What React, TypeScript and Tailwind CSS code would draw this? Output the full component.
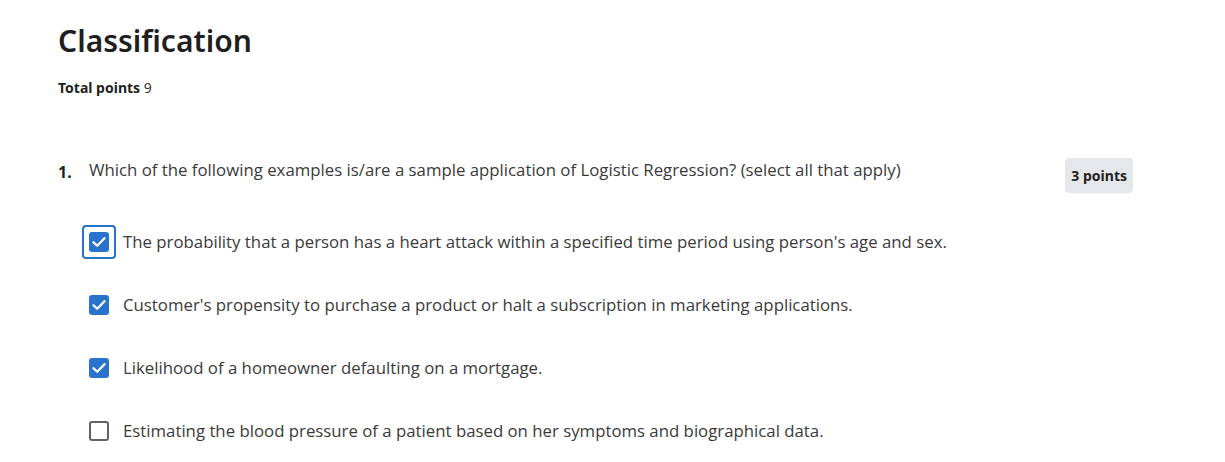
import React from "react";

const options = [
  { text: "The probability that a person has a heart attack within a specified time period using person's age and sex.", checked: true, focus: true },
  { text: "Customer's propensity to purchase a product or halt a subscription in marketing applications.", checked: true },
  { text: "Likelihood of a homeowner defaulting on a mortgage.", checked: true },
  { text: "Estimating the blood pressure of a patient based on her symptoms and biographical data.", checked: false },
];

function Box({ checked, focus }: { checked: boolean; focus?: boolean }) {
  const box = checked ? (
    <div className="w-[20px] h-[20px] rounded-[3px] bg-[#2a73cc] flex items-center justify-center">
      <svg width="18" height="18" viewBox="0 0 18 18" fill="none">
        <path d="M3.5 9.2 L7.2 12.8 L14.5 5.2" stroke="white" strokeWidth="2.3" strokeLinecap="round" strokeLinejoin="round" />
      </svg>
    </div>
  ) : (
    <div className="w-[20px] h-[20px] rounded-[3px] border-2 border-[#636363] bg-white" />
  );
  return (
    <div className={"w-[34px] h-[34px] flex items-center justify-center rounded-[4px] " + (focus ? "border-2 border-[#2a73cc]" : "border-2 border-transparent")}>
      {box}
    </div>
  );
}

export default function App() {
  return (
    <div className="w-[1225px] h-[462px] bg-white overflow-hidden text-[#1f1f1f]" style={{ fontFamily: "'Open Sans', sans-serif" }}>
      <div className="pl-[58px] pt-[21px]">
        <h1 className="text-[30px] leading-[40px] font-semibold text-[#1f1f1f]" style={{ fontFamily: "'Noto Sans', sans-serif" }}>Classification</h1>
        <div className="mt-[17px] text-[14px] leading-[20px]" style={{ fontFamily: "'Noto Sans', sans-serif" }}>
          <span className="font-bold">Total points</span> <span className="text-[#333]">9</span>
        </div>
        <div className="mt-[59px] flex items-start pr-[92px]">
          <div className="w-[31px] pt-[3px] text-[16px] font-bold leading-[24px]" style={{ fontFamily: "'Noto Sans', sans-serif" }}>1.</div>
          <div className="flex-1 text-[16.8px] leading-[24px] text-[#3a3a3a] pt-[1px]">
            Which of the following examples is/are a sample application of Logistic Regression? (select all that apply)
          </div>
          <div className="mt-[1px] h-[35px] px-[6px] rounded-[4px] bg-[#e5e7ea] flex items-center text-[14px] font-bold" style={{ fontFamily: "'Noto Sans', sans-serif" }}>3 points</div>
        </div>
        <div className="mt-[32px] pl-[24px] flex flex-col gap-[29px]">
          {options.map((o, i) => (
            <div key={i} className="flex items-center gap-[7px]">
              <Box checked={o.checked} focus={o.focus} />
              <span className="text-[16.8px] leading-[24px] text-[#3a3a3a]">{o.text}</span>
            </div>
          ))}
        </div>
      </div>
    </div>
  );
}
